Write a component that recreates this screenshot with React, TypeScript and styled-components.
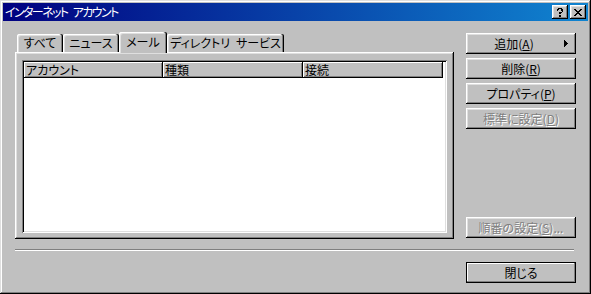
import React from "react";
import styled, { createGlobalStyle } from "styled-components";

const GlobalStyle = createGlobalStyle`
  html, body {
    margin: 0;
    padding: 0;
    background: #c0c0c0;
  }
  body {
    font-family: "Noto Sans CJK JP", "Liberation Sans", sans-serif;
    font-size: 12px;
    font-feature-settings: "palt";
    color: #000;
  }
`;

const Window = styled.div`
  width: 591px;
  height: 294px;
  box-sizing: border-box;
  padding: 3px;
  background: #c0c0c0;
  display: flex;
  flex-direction: column;
  box-shadow: inset -1px -1px #000, inset 1px 1px #dfdfdf,
    inset -2px -2px #808080, inset 2px 2px #fff;
`;

const TitleBar = styled.div`
  height: 18px;
  display: flex;
  align-items: center;
  padding: 0 2px;
  background: linear-gradient(90deg, #000080, #1084d0);
  color: #fff;
`;

const TitleText = styled.div`
  flex: 1;
  line-height: 18px;
  font-size: 12px;
  letter-spacing: -1.6px;
  word-spacing: 4px;
  white-space: pre;
`;

const TitleButtons = styled.div`
  display: flex;
  gap: 2px;
`;

const TitleButton = styled.div`
  width: 16px;
  height: 14px;
  box-sizing: border-box;
  background: #c0c0c0;
  display: flex;
  align-items: center;
  justify-content: center;
  color: #000;
  box-shadow: inset -1px -1px #000, inset 1px 1px #fff,
    inset -2px -2px #808080, inset 2px 2px #dfdfdf;
  svg {
    display: block;
  }
`;

const Body = styled.div`
  display: flex;
  gap: 12px;
  padding: 11px 12px 0 12px;
`;

const LeftCol = styled.div`
  width: 439px;
  display: flex;
  flex-direction: column;
`;

const TabStrip = styled.div`
  height: 20px;
  display: flex;
  align-items: flex-end;
  padding-left: 2px;
`;

const Tab = styled.div<{ $w: number; $active?: boolean }>`
  width: ${(p) => p.$w}px;
  height: ${(p) => (p.$active ? 21 : 18)}px;
  margin-bottom: ${(p) => (p.$active ? -1 : 0)}px;
  position: relative;
  z-index: ${(p) => (p.$active ? 1 : 0)};
  box-sizing: border-box;
  background: #c0c0c0;
  border-top-left-radius: 2px;
  border-top-right-radius: 2px;
  display: flex;
  align-items: center;
  justify-content: center;
  padding-bottom: ${(p) => (p.$active ? 2 : 0)}px;
  line-height: 14px;
  word-spacing: 3px;
  white-space: pre;
  box-shadow: inset -1px 0 #000, inset -2px 0 #808080, inset 1px 1px #fff,
    inset 2px 2px #dfdfdf;
`;

const Panel = styled.div`
  height: 187px;
  box-sizing: border-box;
  padding: 8px 7px 6px 7px;
  display: flex;
  flex-direction: column;
  box-shadow: inset -1px -1px #000, inset 1px 1px #fff,
    inset -2px -2px #808080, inset 2px 2px #dfdfdf;
`;

const ListView = styled.div`
  flex: 1;
  box-sizing: border-box;
  padding: 2px;
  background: #fff;
  box-shadow: inset 1px 1px #808080, inset -1px -1px #fff, inset 2px 2px #000,
    inset -2px -2px #dfdfdf;
`;

const HeaderRow = styled.div`
  display: flex;
  height: 16px;
`;

const HeaderCell = styled.div<{ $w: number }>`
  width: ${(p) => p.$w}px;
  box-sizing: border-box;
  padding-left: 2px;
  background: #c0c0c0;
  line-height: 15px;
  white-space: nowrap;
  box-shadow: inset -1px -1px #000, inset 1px 1px #fff,
    inset -2px -2px #808080;
`;

const RightCol = styled.div`
  width: 110px;
  display: flex;
  flex-direction: column;
  gap: 4px;
  padding: 1px 0;
`;

const Spacer = styled.div`
  flex: 1;
`;

const Button = styled.div<{ $disabled?: boolean; $default?: boolean }>`
  height: 21px;
  box-sizing: border-box;
  background: #c0c0c0;
  display: flex;
  align-items: center;
  justify-content: center;
  line-height: 14px;
  white-space: nowrap;
  color: ${(p) => (p.$disabled ? "#808080" : "#000")};
  text-shadow: ${(p) => (p.$disabled ? "1px 1px #fff" : "none")};
  box-shadow: ${(p) =>
    p.$default
      ? "inset 0 0 0 1px #000, inset -2px -2px #808080, inset 2px 2px #fff"
      : "inset -1px -1px #000, inset 1px 1px #fff, inset -2px -2px #808080, inset 2px 2px #dfdfdf"};
  u {
    text-decoration-thickness: 1px;
    text-underline-offset: 1px;
  }
`;

const ButtonLabel = styled.span`
  flex: 1;
  text-align: center;
  padding-left: 2px;
`;

const MenuArrow = styled.svg`
  display: block;
  margin: 0 8px 0 4px;
`;

const Separator = styled.div`
  margin: 10px 14px 0 12px;
  border-top: 1px solid #808080;
  border-bottom: 1px solid #fff;
`;

const Footer = styled.div`
  display: flex;
  justify-content: flex-end;
  padding: 11px 12px 0 12px;
`;

const CloseWrap = styled.div`
  width: 110px;
`;

const App = (): JSX.Element => {
  return (
    <>
      <GlobalStyle />
      <Window>
        <TitleBar>
          <TitleText>インターネット アカウント</TitleText>
          <TitleButtons>
            <TitleButton>
              <svg width="8" height="9" viewBox="0 0 8 9" shapeRendering="crispEdges">
                <path d="M1 1h1v2h-1zM2 0h4v1h-4zM6 1h1v3h-1zM5 4h1v1h-1zM3 4h2v2h-2zM3 7h2v2h-2zM2 1h1v1h-1zM5 1h1v2h-1z" fill="#000" />
              </svg>
            </TitleButton>
            <TitleButton>
              <svg width="8" height="7" viewBox="0 0 8 7" shapeRendering="crispEdges">
                <path d="M0 0h2v1h-2zM6 0h2v1h-2zM1 1h2v1h-2zM5 1h2v1h-2zM2 2h4v1h-4zM3 3h2v1h-2zM2 4h4v1h-4zM1 5h2v1h-2zM5 5h2v1h-2zM0 6h2v1h-2zM6 6h2v1h-2z" fill="#000" />
              </svg>
            </TitleButton>
          </TitleButtons>
        </TitleBar>
        <Body>
          <LeftCol>
            <TabStrip>
              <Tab $w={46}>すべて</Tab>
              <Tab $w={56}>ニュース</Tab>
              <Tab $w={48} $active>
                メール
              </Tab>
              <Tab $w={117}>ディレクトリ サービス</Tab>
            </TabStrip>
            <Panel>
              <ListView>
                <HeaderRow>
                  <HeaderCell $w={139}>アカウント</HeaderCell>
                  <HeaderCell $w={140}>種類</HeaderCell>
                  <HeaderCell $w={140}>接続</HeaderCell>
                </HeaderRow>
              </ListView>
            </Panel>
          </LeftCol>
          <RightCol>
            <Button>
              <ButtonLabel>
                追加(<u>A</u>)
              </ButtonLabel>
              <MenuArrow width="4" height="7" viewBox="0 0 4 7" shapeRendering="crispEdges">
                <path d="M0 0h1v7h-1zM1 1h1v5h-1zM2 2h1v3h-1zM3 3h1v1h-1z" fill="#000" />
              </MenuArrow>
            </Button>
            <Button>
              削除(<u>R</u>)
            </Button>
            <Button>
              プロパティ(<u>P</u>)
            </Button>
            <Button $disabled>
              標準に設定(<u>D</u>)
            </Button>
            <Spacer />
            <Button $disabled>
              順番の設定(<u>S</u>)...
            </Button>
          </RightCol>
        </Body>
        <Separator />
        <Footer>
          <CloseWrap>
            <Button $default>閉じる</Button>
          </CloseWrap>
        </Footer>
      </Window>
    </>
  );
};

export default App;
